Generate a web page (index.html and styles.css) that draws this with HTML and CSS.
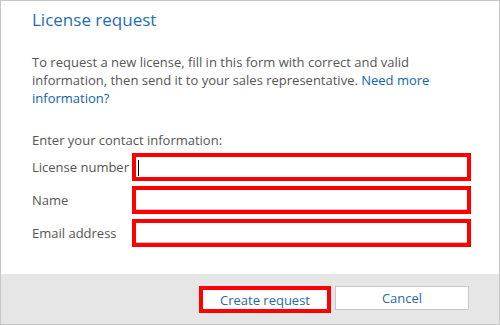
FILE: index.html
```html
<!DOCTYPE html>
<html lang="en">
<head>
    <meta charset="UTF-8">
    <meta name="viewport" content="width=device-width, initial-scale=1.0">
    <title>License request</title>
    <link rel="stylesheet" href="styles.css">
</head>
<body>
    <div class="dialog">
        <!-- Main content -->
        <div class="dialog-body">
            <h1 class="dialog-title">License request</h1>
            <p class="intro">
                To request a new license, fill in this form with correct and valid
                information, then send it to your sales representative.
                <a href="#">Need more information?</a>
            </p>

            <p class="section-label">Enter your contact information:</p>
            <form class="contact-form">
                <div class="field-row">
                    <label for="licenseNumber">License number</label>
                    <div class="field">
                        <input type="text" id="licenseNumber" class="focused">
                        <span class="caret"></span>
                    </div>
                </div>
                <div class="field-row">
                    <label for="name">Name</label>
                    <div class="field">
                        <input type="text" id="name">
                    </div>
                </div>
                <div class="field-row">
                    <label for="email">Email address</label>
                    <div class="field">
                        <input type="text" id="email">
                    </div>
                </div>
            </form>
        </div>

        <!-- Buttons -->
        <div class="dialog-footer">
            <button class="btn btn-create">Create request</button>
            <button class="btn">Cancel</button>
        </div>
    </div>
</body>
</html>
```

FILE: styles.css
```css
body {
    margin: 0;
    padding: 0;
    font-family: "Open Sans", "Noto Sans", sans-serif;
    background-color: #fff;
}
.dialog {
    width: 500px;
    height: 325px;
    box-sizing: border-box;
    border: 1px solid #c6c6c6;
    display: flex;
    flex-direction: column;
}
/* Body */
.dialog-body {
    flex: 1;
    padding: 0 28px 0 31px;
    color: #555;
    font-size: 13px;
}
.dialog-title {
    margin: 6px 0 0;
    font-size: 17px;
    font-weight: 400;
    line-height: 26px;
    color: #1f6db6;
}
.intro {
    margin: 20px 0 0;
    line-height: 18px;
}
.intro a {
    color: #0e63b0;
    text-decoration: none;
}
.section-label {
    margin: 24px 0 0;
    line-height: 18px;
}
.contact-form {
    margin-top: 4px;
    display: flex;
    flex-direction: column;
    gap: 5px;
}
.field-row {
    display: flex;
    align-items: center;
}
.field-row label {
    width: 100px;
}
.field {
    position: relative;
}
.field input {
    display: block;
    width: 339px;
    height: 28px;
    box-sizing: border-box;
    margin: 0;
    border: 4px solid #ff0000;
    box-shadow: inset 0 -1px 0 #c8c8c8;
    outline: none;
    background: #fff;
}
.field input.focused {
    box-shadow: none;
}
.caret {
    position: absolute;
    left: 6px;
    top: 7px;
    width: 1px;
    height: 16px;
    background-color: #000;
}
/* Footer */
.dialog-footer {
    height: 50px;
    background-color: #e6e6e6;
    display: flex;
    justify-content: flex-end;
    align-items: flex-start;
    gap: 4px;
    padding: 12px 30px 0 0;
    box-sizing: border-box;
}
.btn {
    width: 134px;
    height: 24px;
    margin: 0;
    padding: 0;
    background-color: #fff;
    border: 1px solid #c8c8c8;
    color: #2a68a8;
    font-family: "Open Sans", "Noto Sans", sans-serif;
    font-size: 13px;
}
.btn-create {
    width: 132px;
    height: 27px;
    border: 4px solid #ff0000;
}
```
